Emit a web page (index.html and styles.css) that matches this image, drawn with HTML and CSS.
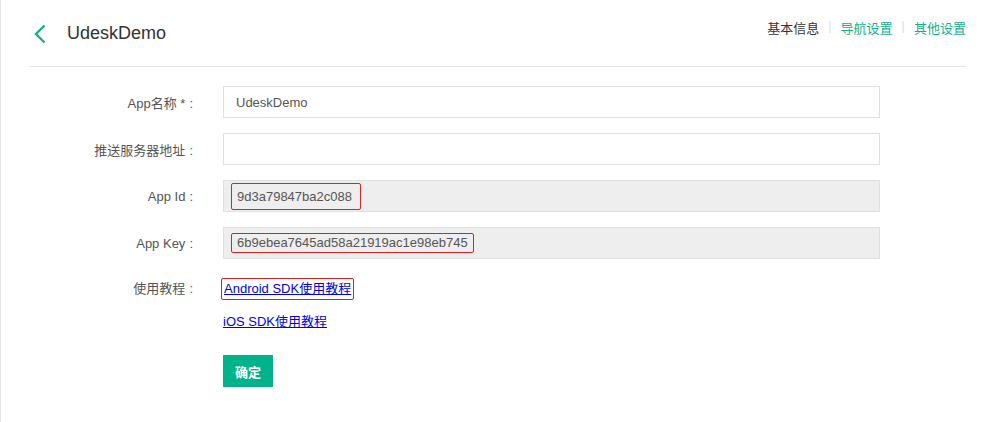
FILE: index.html
```
<!DOCTYPE html>
<html lang="zh-CN">
<head>
    <meta charset="UTF-8">
    <title>UdeskDemo</title>
    <link rel="stylesheet" href="styles.css">
</head>
<body>
    <div class="page">
        <div class="header">
            <a class="back" href="#">
                <svg width="14" height="20" viewBox="0 0 14 20">
                    <polyline points="11.5,1.5 3,10 11.5,18.5" fill="none" stroke="#16b08b" stroke-width="2.4" />
                </svg>
            </a>
            <div class="title">UdeskDemo</div>
            <div class="nav">
                <span class="nav-item current">基本信息</span>
                <span class="sep">|</span>
                <a class="nav-item" href="#">导航设置</a>
                <span class="sep">|</span>
                <a class="nav-item" href="#">其他设置</a>
            </div>
        </div>

        <div class="form">
            <div class="row">
                <label class="label">App名称 *<span class="colon">:</span></label>
                <div class="field"><input class="input" type="text" value="UdeskDemo"></div>
            </div>
            <div class="row">
                <label class="label">推送服务器地址<span class="colon">:</span></label>
                <div class="field"><input class="input" type="text" value=""></div>
            </div>
            <div class="row">
                <label class="label">App Id<span class="colon">:</span></label>
                <div class="field readonly">
                    <span class="mark mark-tall">9d3a79847ba2c088</span>
                </div>
            </div>
            <div class="row">
                <label class="label">App Key<span class="colon">:</span></label>
                <div class="field readonly">
                    <span class="mark">6b9ebea7645ad58a21919ac1e98eb745</span>
                </div>
            </div>
            <div class="row row-links">
                <label class="label">使用教程<span class="colon">:</span></label>
                <div class="links">
                    <a class="link link-marked" href="#">Android SDK使用教程</a>
                    <a class="link" href="#">iOS SDK使用教程</a>
                    <button class="btn" type="button">确定</button>
                </div>
            </div>
        </div>
    </div>
</body>
</html>
```

FILE: styles.css
```
html, body {
    margin: 0;
    padding: 0;
    background: #fff;
}

body {
    font-family: "Liberation Sans", Arial, "Noto Sans CJK SC", sans-serif;
    font-size: 13px;
    color: #555;
}

.page {
    border-left: 1px solid #e6e6e6;
    min-height: 100vh;
    box-sizing: border-box;
    padding: 0 27px 0 28px;
}

.header {
    display: flex;
    align-items: center;
    height: 66px;
    border-bottom: 1px solid #e6e6e6;
}

.back {
    display: flex;
    margin-left: 4px;
    margin-top: 1px;
}

.title {
    margin-left: 20px;
    font-size: 18px;
    color: #333;
    margin-top: 1px;
}

.nav {
    display: flex;
    margin-left: auto;
    align-self: flex-start;
    padding-top: 18px;
    font-size: 13px;
}

.nav-item {
    color: #16b08b;
    text-decoration: none;
}

.nav-item.current {
    color: #333;
}

.sep {
    color: #ddd;
    margin: 0 9px;
}

.form {
    padding-top: 19px;
}

.row {
    display: flex;
    align-items: center;
    margin-bottom: 15px;
}

.label {
    width: 164px;
    text-align: right;
    margin-right: 30px;
    color: #555;
}

.colon {
    margin-left: 4px;
}

.field {
    width: 657px;
    height: 32px;
    box-sizing: border-box;
    border: 1px solid #e0e0e0;
    display: flex;
    align-items: center;
}

.input {
    width: 100%;
    height: 100%;
    box-sizing: border-box;
    border: none;
    outline: none;
    padding: 0 12px;
    font: inherit;
    color: #555;
    background: transparent;
}

.field.readonly {
    background: #eee;
}

.mark {
    margin-left: 7px;
    padding: 0 5px;
    border: 1px solid #e02020;
    border-radius: 2px;
    line-height: 18px;
    color: #555;
}

.mark-tall {
    line-height: 25px;
    padding-right: 8px;
}

.row-links {
    align-items: flex-start;
    padding-top: 4px;
}

.row-links .label {
    line-height: 22px;
}

.links {
    display: flex;
    flex-direction: column;
    align-items: flex-start;
}

.link {
    color: #0000ee;
    text-decoration: underline;
    line-height: 22px;
}

.link-marked {
    margin-left: -2px;
    padding: 0 2px;
    border: 1px solid #e02020;
    border-radius: 2px;
    line-height: 20px;
}

.link + .link {
    margin-top: 11px;
}

.btn {
    margin-top: 22px;
    width: 50px;
    height: 32px;
    border: none;
    background: #00b38a;
    color: #fff;
    font: inherit;
    font-size: 13px;
    font-weight: bold;
    padding: 0;
    cursor: pointer;
}
```
